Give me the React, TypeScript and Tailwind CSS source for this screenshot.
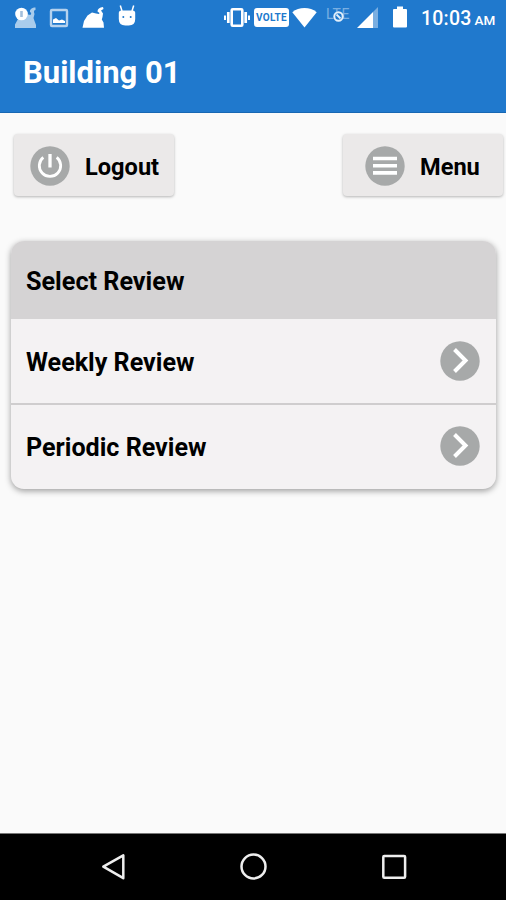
import type { ReactNode } from "react";

const reviews = ["Weekly Review", "Periodic Review"];

function StatusBar() {
    return (
        <div className="flex h-9 items-start text-white">
            <svg className="ml-[14px] mt-[6px] h-[23px] w-[23px] shrink-0" viewBox="0 0 23 23" fill="none">
                <path d="M1 22V18.500L4 13L12 8L16.500 9L17.300 7L16 6C15.500 3.500 18 1.500 21.500 1.500V4C20 4 19.500 5.500 20.500 8L19.500 12L20.500 15L22 19V22Z" fill="#a9ccec" />
                <circle cx="7.500" cy="8" r="6.300" fill="#ffffff" />
                <path d="M7.500 5V11" stroke="#a3bfdc" strokeWidth="2.600" />
            </svg>
            <svg className="ml-[12px] mt-[8px] h-5 w-5 shrink-0" viewBox="0 0 20 20" fill="none">
                <rect x="2" y="2" width="16" height="16" rx="1" stroke="#b5d2ee" strokeWidth="2.400" />
                <path d="M4 15V11.500L7 10L10 12.500L13 11.500L16 13V15Z" fill="#ffffff" />
            </svg>
            <svg className="ml-[13px] mt-[6px] h-[23px] w-[23px] shrink-0" viewBox="0 0 23 23" fill="currentColor">
                <path d="M.5 21.800L2 15L5.500 9.500L10 6.500L14 7.500L17 8L17.500 7L15.500 5.500C15.500 3 17.500 1.500 21 1L21.500 3L19 4.500L21 7.500L20.500 11L19.800 13.500L21.500 16.500L22 21.800Z" />
            </svg>
            <svg className="ml-[13px] mt-[5px] h-[22px] w-[18px] shrink-0" viewBox="0 0 18 22">
                <path d="M2.300 .5L4 6M15.700 .5L14 6" stroke="currentColor" strokeWidth="1.500" />
                <path d="M.8 10V8Q.8 5.500 3.300 5.500H14.700Q17.200 5.500 17.200 8V14Q17.200 20.500 10.700 20.500H7.300Q.8 20.500 .8 14Z" fill="currentColor" />
                <circle cx="5.300" cy="12" r="1" fill="#2079cd" />
                <circle cx="12.700" cy="12" r="1" fill="#2079cd" />
            </svg>
            <svg className="ml-[87px] mt-[7px] h-[21px] w-[28px] shrink-0" viewBox="0 0 28 21" fill="none" stroke="currentColor">
                <rect x="8.700" y="2.200" width="10.600" height="16.600" rx="1" strokeWidth="2.600" />
                <path d="M5.300 5V16M22.700 5V16" strokeWidth="2.700" />
                <path d="M2 8.500V13M26 8.500V13" strokeWidth="2" />
            </svg>
            <div className="ml-[3px] mt-[8px] flex h-[19px] w-[35px] shrink-0 items-center justify-center rounded-[3px] bg-white text-[10px] font-bold leading-none tracking-[0.3px] text-[#2079cd]">
                VOLTE
            </div>
            <svg className="ml-[3px] mt-[7px] h-[21px] w-[25px] shrink-0" viewBox="0 0 25 21" fill="currentColor">
                <path d="M.3 5.200Q5.500 1 12.500 1T24.700 5.200L12.500 20.500Z" />
            </svg>
            <div className="relative ml-[9px] mt-[8px] h-[14px] w-[26px] shrink-0">
                <span className="block text-[14px] font-normal leading-[13px] tracking-[0.8px] text-[#79afe2]">LTE</span>
                <svg className="absolute left-[7px] top-[3px] h-[11px] w-[11px]" viewBox="0 0 11 11">
                    <circle cx="5.500" cy="5.500" r="4.200" fill="#2079cd" stroke="#e3effa" strokeWidth="2" />
                    <path d="M3.500 3.500L7.500 7.500" stroke="#e3effa" strokeWidth="1.800" />
                </svg>
            </div>
            <svg className="ml-[5px] mt-[7px] h-[21px] w-[21px] shrink-0" viewBox="0 0 21 21" fill="currentColor">
                <path d="M0 21L16 5V21Z" />
                <path d="M16 5L21 0V21H16Z" opacity=".4" />
            </svg>
            <svg className="ml-[15px] mt-[6px] h-[22px] w-[14px] shrink-0" viewBox="0 0 14 22" fill="currentColor">
                <path d="M4 .5H10V3H13Q14 3 14 4V20.500Q14 21.500 13 21.500H1Q0 21.500 0 20.500V4Q0 3 1 3H4Z" />
            </svg>
            <div className="ml-[14px] mt-[7px] flex items-baseline whitespace-nowrap leading-6">
                <span className="text-[19.5px] font-medium tracking-[0.2px]">10:03</span>
                <span className="ml-[3px] text-[13.5px] font-medium">AM</span>
            </div>
        </div>
    );
}

function ActionButton({ label, children }: { label: string; children: ReactNode }) {
    return (
        <button className="flex h-[62px] w-[160px] items-center rounded-[4px] bg-[#ebe9e9] pt-[2px] shadow-[0_1px_3px_rgba(0,0,0,0.28)]">
            {children}
            <span className="pt-[2px] text-[23.6px] font-bold leading-8">{label}</span>
        </button>
    );
}

function ChevronBadge() {
    return (
        <svg className="h-10 w-10" viewBox="0 0 40 40" fill="none">
            <circle cx="20" cy="20" r="19.700" fill="#a7a9a9" />
            <path d="M14.500 8.500L25.500 19.500L14.500 30.500" stroke="#ffffff" strokeWidth="4" />
        </svg>
    );
}

export default function App() {
    return (
        <div className="flex h-[900px] w-[506px] flex-col overflow-hidden bg-[#fafafa] font-['Roboto',sans-serif] text-black">
            <header className="h-[113px] shrink-0 border-b border-[#1767b3] bg-[#2079cd]">
                <StatusBar />
                <h1 className="ml-[23px] mt-[17px] text-[31px] font-bold leading-10 text-white">Building 01</h1>
            </header>

            <main className="flex-1">
                <div className="flex justify-between pl-[14px] pr-[3px] pt-[21px]">
                    <ActionButton label="Logout">
                        <svg className="ml-4 mr-[15px] h-10 w-10" viewBox="0 0 40 40" fill="none" stroke="#ffffff">
                            <circle cx="20" cy="20" r="19.700" fill="#a7a9a9" stroke="none" />
                            <path d="M13.300 11.300A10.700 10.700 0 1 0 26.700 11.300" strokeWidth="2.800" />
                            <path d="M20 8V21.500" strokeWidth="3.300" />
                        </svg>
                    </ActionButton>
                    <ActionButton label="Menu">
                        <svg className="ml-[22px] mr-[15px] h-10 w-10" viewBox="0 0 40 40" fill="none" stroke="#ffffff">
                            <circle cx="20" cy="20" r="19.700" fill="#a7a9a9" stroke="none" />
                            <path d="M8 12.500H32M8 19.700H32M8 26.900H32" strokeWidth="3.600" />
                        </svg>
                    </ActionButton>
                </div>

                <section className="ml-[11px] mt-[45px] w-[485px] overflow-hidden rounded-[13px] bg-[#f4f2f3] shadow-[0_2px_6px_rgba(0,0,0,0.38)]">
                    <h2 className="flex h-[78px] items-center bg-[#d5d3d4] pl-[15px] pt-[4px] text-[25.2px] font-bold">Select Review</h2>
                    {reviews.map((review) => (
                        <div key={review} className="flex h-[86px] items-center justify-between border-b-2 border-[#cfcdce] pl-[15px] pr-[16px] text-[25.1px] font-bold last:h-[84px] last:border-b-0 last:pb-[2px]">
                            <span className="pt-[3px]">{review}</span>
                            <ChevronBadge />
                        </div>
                    ))}
                </section>
            </main>

            <nav className="flex h-[67px] shrink-0 items-center border-t border-[#777777] bg-black">
                <svg className="ml-[100px] h-7 w-7" viewBox="0 0 28 28" fill="none" stroke="#eeeeee" strokeWidth="2.500">
                    <path d="M23.300 2.300V25.200L3.300 13.700Z" strokeLinejoin="round" />
                </svg>
                <svg className="ml-[111px] h-7 w-7" viewBox="0 0 28 28" fill="none" stroke="#eeeeee" strokeWidth="2.500">
                    <circle cx="14.500" cy="13.500" r="12" />
                </svg>
                <svg className="ml-[113px] h-7 w-7" viewBox="0 0 28 28" fill="none" stroke="#eeeeee" strokeWidth="2.500">
                    <rect x="3.300" y="3" width="21.800" height="21.800" rx="1" />
                </svg>
            </nav>
        </div>
    );
}
